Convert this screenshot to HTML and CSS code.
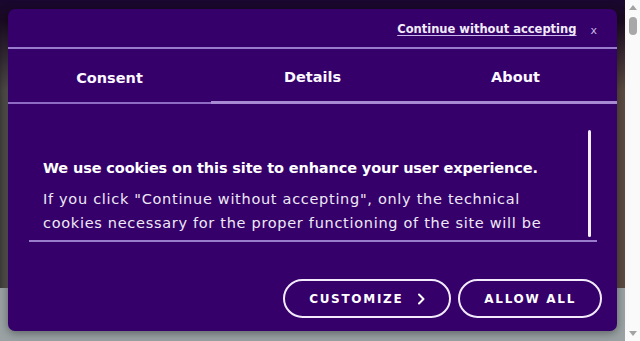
FILE: index.html
```html
<!DOCTYPE html>
<html lang="en">
<head>
  <meta charset="UTF-8" />
  <meta name="viewport" content="width=device-width, initial-scale=1.0"/>
  <title>Cookie consent</title>
  <link rel="stylesheet" href="styles.css">
</head>
<body>
  <div class="window">
    <div class="page">
      <div class="hero"></div>
      <div class="footer-strip"></div>

      <!-- consent dialog sits over the page -->
      <div class="modal">
        <div class="modal-top">
          <a class="skip" href="#">Continue without accepting</a>
          <span class="close">x</span>
        </div>
        <div class="tabs">
          <div class="tab tab-active">Consent</div>
          <div class="tab">Details</div>
          <div class="tab">About</div>
        </div>
        <div class="body">
          <div class="scroll">
            <div class="scroll-text">
              <h2 class="title">We use cookies on this site to enhance your user experience.</h2>
              <p class="text">If you click "Continue without accepting", only the technical cookies necessary for the proper functioning of the site will be used.</p>
            </div>
            <div class="scroll-bar"></div>
          </div>
        </div>
        <div class="actions">
          <button class="btn">CUSTOMIZE <span class="chev">
            <svg width="8" height="12" viewBox="0 0 8 12"><path d="M2 1.5 L6.5 6 L2 10.5" fill="none" stroke="#fff" stroke-width="2" stroke-linecap="round" stroke-linejoin="round"/></svg>
          </span></button>
          <button class="btn">ALLOW ALL</button>
        </div>
      </div>
    </div>
    <div class="sbar">
      <div class="sbar-up"></div>
      <div class="sbar-thumb"></div>
      <div class="sbar-track"></div>
      <div class="sbar-down"></div>
    </div>
  </div>
</body>
</html>
```

FILE: styles.css
```css
html, body {
  margin: 0;
  height: 100%;
  overflow: hidden;
}
body {
  font-family: "DejaVu Sans", "Open Sans", sans-serif;
  color: #fff;
}
.window {
  display: flex;
  height: 341px;
}
.page {
  position: relative;
  flex: 1;
  display: flex;
  flex-direction: column;
  background: #9aa2a4;
}
.hero {
  height: 288px;
  background:
    linear-gradient(180deg, #1a0730 0px, #1a0a22 20px, rgba(26,10,34,0) 90px),
    linear-gradient(90deg, #3c3a38 0px, #5e5a55 8px, #6a5c50 40%, #5a4a40 100%);
}
.footer-strip {
  flex: 1;
  background: #9aa2a4;
}

/* dialog */
.modal {
  position: absolute;
  left: 8px;
  top: 9px;
  width: 609px;
  height: 322px;
  background: #35006a;
  border-radius: 7px;
  box-shadow: 0 2px 10px rgba(0,0,0,0.4);
  display: flex;
  flex-direction: column;
}
.modal-top {
  height: 38px;
  display: flex;
  justify-content: flex-end;
  align-items: center;
  gap: 14px;
  padding: 0 20px 0 0;
  border-bottom: 2px solid #9a7ccc;
}
.skip {
  color: #f2ecfa;
  font-size: 11.5px;
  font-weight: 700;
  text-decoration: underline;
  text-decoration-color: #c9b6ea;
  text-underline-offset: 2px;
  margin-top: 2px;
}
.close {
  color: #c7b5e6;
  font-size: 11px;
  margin-top: 4px;
}
.tabs {
  display: flex;
  height: 55px;
}
.tab {
  flex: 1;
  display: flex;
  align-items: center;
  justify-content: center;
  font-size: 14.5px;
  font-weight: 700;
  color: #fbf8ff;
  border-bottom: 3px solid #a889d4;
  padding-top: 4px;
}
.tab-active {
  border-bottom: 2px solid #8f6cc4;
  padding-top: 5px;
}
.body {
  padding: 24px 20px 0 21px;
}
.scroll {
  display: flex;
  height: 112px;
  border-bottom: 2px solid #9a7ccc;
}
.scroll-text {
  flex: 1;
  overflow: hidden;
  padding: 28px 0 0 14px;
  height: 79px;
}
.title {
  margin: 0 0 7px;
  font-size: 14.5px;
  font-weight: 700;
  line-height: 24px;
  letter-spacing: -0.12px;
  color: #fff;
}
.text {
  margin: 0;
  font-size: 14.5px;
  line-height: 24px;
  letter-spacing: 0.7px;
  color: #efe9f6;
  width: 512px;
}
.scroll-bar {
  width: 3px;
  height: 107px;
  margin: 2px 6px 0 0;
  background: #f4eefc;
  border-radius: 2px;
}
.actions {
  display: flex;
  justify-content: flex-end;
  gap: 7px;
  padding: 37px 15px 0 0;
}
.btn {
  height: 39px;
  border: 2px solid #f3ebfb;
  border-radius: 20px;
  background: transparent;
  color: #fff;
  font-family: inherit;
  font-size: 12px;
  font-weight: 700;
  letter-spacing: 1.7px;
  padding: 0 24px;
  display: flex;
  align-items: center;
}
.chev {
  display: inline-flex;
  margin-left: 14px;
}

/* page scrollbar */
.sbar {
  width: 15px;
  display: flex;
  flex-direction: column;
  align-items: center;
  background: #fafafa;
}
.sbar-up {
  margin-top: 5px;
  width: 0;
  height: 0;
  border-left: 4px solid transparent;
  border-right: 4px solid transparent;
  border-bottom: 5px solid #a3a3a3;
}
.sbar-thumb {
  margin-top: 7px;
  width: 8px;
  height: 18px;
  border-radius: 4px;
  background: #a8a8a8;
}
.sbar-track {
  flex: 1;
}
.sbar-down {
  margin-bottom: 5px;
  width: 0;
  height: 0;
  border-left: 4px solid transparent;
  border-right: 4px solid transparent;
  border-top: 5px solid #a3a3a3;
}
```
